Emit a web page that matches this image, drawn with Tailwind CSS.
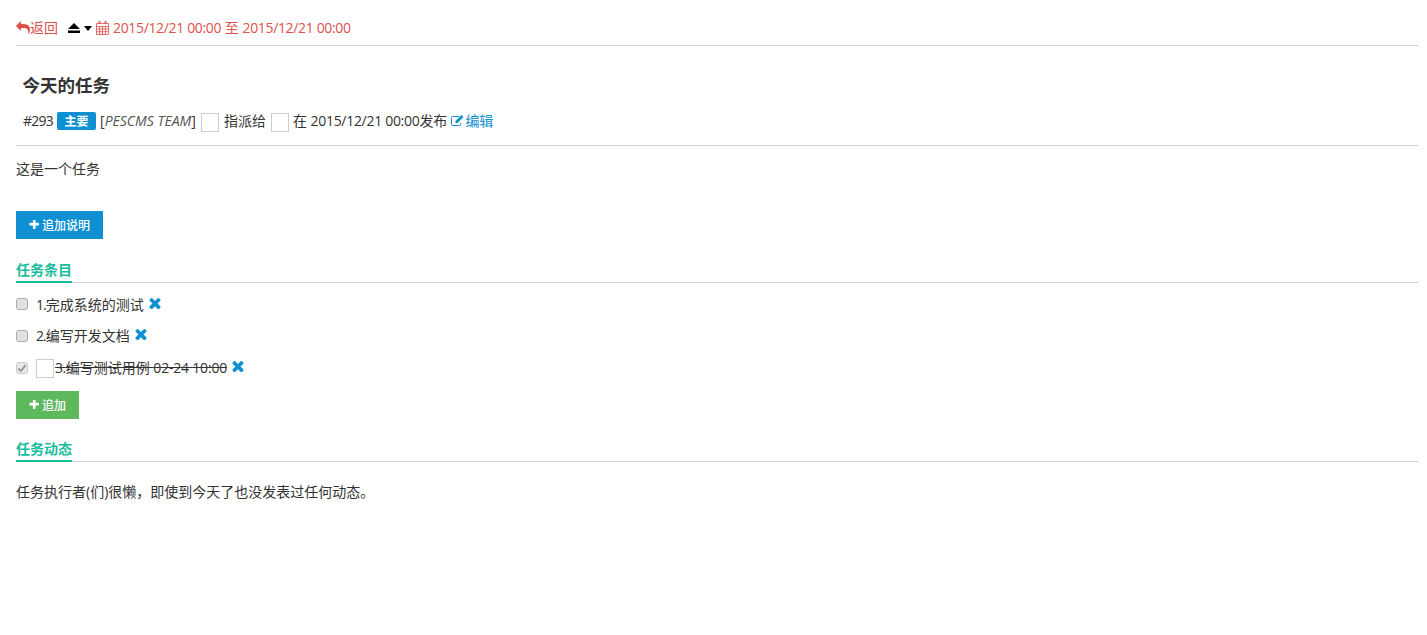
<!DOCTYPE html>
<html lang="zh-CN">
<head>
    <meta charset="UTF-8">
    <meta name="viewport" content="width=device-width, initial-scale=1.0">
    <title>今天的任务</title>
    <script src="https://cdn.jsdelivr.net/npm/@tailwindcss/browser@4"></script>
</head>
<body class="bg-white text-[#333] text-[14px] font-['Open_Sans','Noto_Sans_CJK_SC',sans-serif]">
    <div class="pl-4 pr-[9px]">
        <!-- toolbar -->
        <div class="h-[46px] pt-[18px] border-b border-[#d0d0d0] flex items-start text-[#dd514c] leading-[20px]">
            <svg class="w-[14px] h-[14px] mt-[3px] fill-[#dd514c]" viewBox="0 0 1792 1792"><path d="M1792 1120q0 166-127 451-3 7-10.5 24t-13.5 30-13 22q-12 17-28 17-15 0-23.5-10t-8.5-25q0-9 2.5-26.5t2.500-23.500q5-68 5-123 0-101-17.500-181t-48.500-138.500-80-101-105.500-69.500-133-42.500-154-21.500-175.500-6h-224v256q0 26-19 45t-45 19-45-19l-512-512q-19-19-19-45t19-45l512-512q19-19 45-19t45 19 19 45v256h224q713 0 875 403 53 134 53 333z"/></svg>
            <span>返回</span>
            <svg class="w-[12px] h-[12px] mt-[4px] ml-[10px] fill-black" viewBox="0 0 12 12"><path d="M6 1 12 7H0zM0 8.500h12V11H0z"/></svg>
            <svg class="w-[8px] h-[5px] mt-[8px] ml-[4px] fill-black" viewBox="0 0 8 5"><path d="M0 0h8L4 5z"/></svg>
            <svg class="w-[13px] h-[14px] mt-[3px] ml-[4px]" viewBox="0 0 13 14" fill="none" stroke="#dd514c" stroke-opacity="0.8"><path d="M.5 2.500h12v11H.5zM.5 5.500h12M.5 8h12M.5 10.700h12M3.500 5.500v8M6.500 5.500v8M9.500 5.500v8"/><path d="M3.500 0v3M9.500 0v3" stroke-width="2"/></svg>
            <span class="ml-[4px]"><span class="tracking-[-0.34px]">2015/12/21 00:00</span> 至 <span class="tracking-[-0.34px]">2015/12/21 00:00</span></span>
        </div>

        <!-- title -->
        <h1 class="pl-[6.500px] mt-[26px] text-[17.500px] leading-[26px] font-bold">今天的任务</h1>
        <div class="pl-[7px] mt-[13px] h-[19px] flex items-center leading-[19px]">
            <span class="tracking-[-0.75px]">#293</span>
            <span class="ml-[4px] mt-px w-[39px] h-[18px] bg-[#0e90d2] rounded-[2px] text-white text-[12px] font-bold flex items-center justify-center">主要</span>
            <span class="ml-[4px]">[<i class="text-[#555]">PESCMS TEAM</i>]</span>
            <span class="ml-[5px] self-start mt-[2px] w-[18px] h-[19px] border border-[#ccc]"></span>
            <span class="ml-[5px]">指派给</span>
            <span class="ml-[5px] self-start mt-[2px] w-[18px] h-[19px] border border-[#ccc]"></span>
            <span class="ml-[4px]">在 <span class="tracking-[-0.3px]">2015/12/21 00:00</span>发布</span>
            <span class="ml-[4px] flex items-center text-[#0e90d2]">
                <svg class="w-[14px] h-[13px]" viewBox="0 0 14 13" fill="none" stroke="#0e90d2"><path d="M9.500 9V10.500a1 1 0 0 1-1 1H1.500a1 1 0 0 1-1-1V3.500a1 1 0 0 1 1-1H8"/><path d="M4.500 9V7l6-6 2 2-6 6z" fill="#0e90d2" stroke="none"/></svg>编辑</span>
        </div>
        <div class="mt-[15px] border-b border-[#d0d0d0]"></div>

        <p class="mt-[13px] leading-[20px]">这是一个任务</p>

        <button class="mt-[32px] w-[87px] h-[28px] bg-[#0e90d2] text-white text-[12px] font-medium flex items-center justify-center gap-[3px]">
            <svg class="w-[10px] h-[10px] fill-white" viewBox="128 224 1472 1472"><path d="M1600 736v192q0 40-28 68t-68 28h-416v416q0 40-28 68t-68 28h-192q-40 0-68-28t-28-68v-416h-416q-40 0-68-28t-28-68v-192q0-40 28-68t68-28h416v-416q0-40 28-68t68-28h192q40 0 68 28t28 68v416h416q40 0 68 28t28 68z"/></svg><span class="mt-[2px]">追加说明</span>
        </button>

        <!-- items -->
        <div class="mt-[21px] border-b border-[#d0d0d0] h-[23px] flex items-start">
            <span class="h-[23px] shrink-0 border-b-[2px] border-[#19bc9c] text-[#19bc9c] text-[14px] font-bold leading-[20px] w-[56px]">任务条目</span>
        </div>
        <ul class="mt-[12px]">
            <li class="h-[20px] flex items-center">
                <input type="checkbox" class="appearance-none -mt-[2px] w-[12px] h-[12px] rounded-[3px] border border-[#aaa] bg-[#e0e0e0]">
                <span class="ml-[8px] mb-[2px]"><span class="tracking-[-1px]">1.</span>完成系统的测试</span>
                <svg class="ml-[5px] -mt-[4px] w-[12px] h-[12px] fill-[#0e90d2]" viewBox="256 256 1280 1280"><path d="M1490 1322q0 40-28 68l-136 136q-28 28-68 28t-68-28l-294-294-294 294q-28 28-68 28t-68-28l-136-136q-28-28-28-68t28-68l294-294-294-294q-28-28-28-68t28-68l136-136q28-28 68-28t68 28l294 294 294-294q28-28 68-28t68 28l136 136q28 28 28 68t-28 68l-294 294 294 294q28 28 28 68z"/></svg>
            </li>
            <li class="mt-[11px] h-[20px] flex items-center">
                <input type="checkbox" class="appearance-none w-[12px] h-[12px] rounded-[3px] border border-[#aaa] bg-[#e0e0e0]">
                <span class="ml-[8px] mb-[2px]"><span class="tracking-[-1px]">2.</span>编写开发文档</span>
                <svg class="ml-[5px] -mt-[4px] w-[12px] h-[12px] fill-[#0e90d2]" viewBox="256 256 1280 1280"><path d="M1490 1322q0 40-28 68l-136 136q-28 28-68 28t-68-28l-294-294-294 294q-28 28-68 28t-68-28l-136-136q-28-28-28-68t28-68l294-294-294-294q-28-28-28-68t28-68l136-136q28-28 68-28t68 28l294 294 294-294q28-28 68-28t68 28l136 136q28 28 28 68t-28 68l-294 294 294 294q28 28 28 68z"/></svg>
            </li>
            <li class="mt-[12px] h-[20px] flex items-center">
                <span class="w-[12px] h-[12px] rounded-[3px] border border-[#ccc] bg-[#e8e8e8] flex items-center justify-center">
                    <svg class="w-[8px] h-[8px]" viewBox="0 0 8 8" fill="none" stroke="#999" stroke-width="2"><path d="M.5 4.500 3 7l4.500-6"/></svg>
                </span>
                <span class="ml-[8px] w-[18px] h-[19px] border border-[#ccc]"></span>
                <span class="ml-px mb-[2px] line-through"><span class="tracking-[-0.5px]">3.</span>编写测试用例 <span class="tracking-[-0.2px]">02-24 10:00</span></span>
                <svg class="ml-[5px] -mt-[4px] w-[12px] h-[12px] fill-[#0e90d2]" viewBox="256 256 1280 1280"><path d="M1490 1322q0 40-28 68l-136 136q-28 28-68 28t-68-28l-294-294-294 294q-28 28-68 28t-68-28l-136-136q-28-28-28-68t28-68l294-294-294-294q-28-28-28-68t28-68l136-136q28-28 68-28t68 28l294 294 294-294q28-28 68-28t68 28l136 136q28 28 28 68t-28 68l-294 294 294 294q28 28 28 68z"/></svg>
            </li>
        </ul>

        <button class="mt-[13px] w-[63px] h-[28px] bg-[#5eb95e] text-white text-[12px] font-medium flex items-center justify-center gap-[3px]">
            <svg class="w-[10px] h-[10px] fill-white" viewBox="128 224 1472 1472"><path d="M1600 736v192q0 40-28 68t-68 28h-416v416q0 40-28 68t-68 28h-192q-40 0-68-28t-28-68v-416h-416q-40 0-68-28t-28-68v-192q0-40 28-68t68-28h416v-416q0-40 28-68t68-28h192q40 0 68 28t28 68v416h416q40 0 68 28t28 68z"/></svg><span class="mt-[2px]">追加</span>
        </button>

        <!-- activity -->
        <div class="mt-[20px] border-b border-[#d0d0d0] h-[23px] flex items-start">
            <span class="h-[23px] shrink-0 border-b-[2px] border-[#19bc9c] text-[#19bc9c] text-[14px] font-bold leading-[20px] w-[56px]">任务动态</span>
        </div>
        <p class="mt-[20px] leading-[20px]">任务执行者(们)很懒，即使到今天了也没发表过任何动态。</p>
    </div>
</body>
</html>
